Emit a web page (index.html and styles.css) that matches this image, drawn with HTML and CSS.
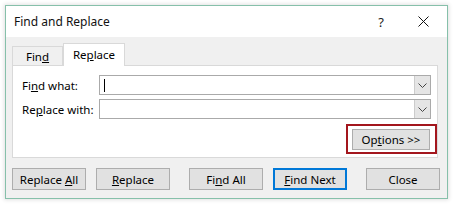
FILE: index.html
```html
<!DOCTYPE html>
<html>
<head>
    <title>Find and Replace</title>
    <link rel="stylesheet" href="styles.css">
</head>
<body>
    <div class="dialog">
        <div class="titlebar">
            <span class="title">Find and Replace</span>
            <span class="help">?</span>
            <svg class="close-x" width="11" height="11" viewBox="0 0 11 11">
                <path d="M0.5 0.5L10.5 10.5M10.5 0.5L0.5 10.5" stroke="#111" stroke-width="1" fill="none"/>
            </svg>
        </div>

        <div class="content">
            <div class="tabs">
                <div class="tab">Fin<u>d</u></div>
                <div class="tab active">Re<u>p</u>lace</div>
            </div>

            <div class="panel">
                <div class="field-row">
                    <label class="field-label">Fi<u>n</u>d what:</label>
                    <div class="combo">
                        <span class="caret"></span>
                        <span class="drop">
                            <svg width="9" height="5" viewBox="0 0 9 5"><path d="M0.5 0.5L4.5 4.5L8.5 0.5" stroke="#444" fill="none"/></svg>
                        </span>
                    </div>
                </div>
                <div class="field-row">
                    <label class="field-label">Re<u>p</u>lace with:</label>
                    <div class="combo">
                        <span class="drop">
                            <svg width="9" height="5" viewBox="0 0 9 5"><path d="M0.5 0.5L4.5 4.5L8.5 0.5" stroke="#444" fill="none"/></svg>
                        </span>
                    </div>
                </div>
                <div class="options-row">
                    <!-- red highlight box round the button -->
                    <span class="highlight">
                        <button class="btn options">Op<u>t</u>ions &gt;&gt;</button>
                    </span>
                </div>
            </div>

            <div class="button-row">
                <div class="btn-group">
                    <button class="btn">Replace <u>A</u>ll</button>
                    <button class="btn"><u>R</u>eplace</button>
                </div>
                <div class="btn-group">
                    <button class="btn">Fi<u>n</u>d All</button>
                    <button class="btn default"><u>F</u>ind Next</button>
                </div>
                <button class="btn">Close</button>
            </div>
        </div>
    </div>
</body>
</html>
```

FILE: styles.css
```css
body {
    font-family: "Noto Sans", "DejaVu Sans", sans-serif;
    font-size: 11.5px;
    color: #000;
    margin: 0;
    background: #fff;
}
.dialog {
    width: 441px;
    height: 192px;
    margin: 5px;
    border: 1px solid #86c0aa;
    background: #f0f0f0;
    box-shadow: 0 0 4px 1px rgba(0,0,0,0.12);
    display: flex;
    flex-direction: column;
}
.titlebar {
    height: 31px;
    background: #fff;
    display: flex;
    align-items: center;
    padding-left: 8px;
    padding-right: 18px;
}
.title {
    flex: 1;
    font-size: 12px;
    color: #111;
}
.help {
    font-size: 13px;
    margin-right: 34px;
    color: #222;
}
.content {
    flex: 1;
    padding: 6px 9px 0 6px;
}
.tabs {
    display: flex;
    align-items: flex-end;
    height: 22px;
    position: relative;
    z-index: 1;
}
.tab {
    height: 19px;
    width: 51px;
    box-sizing: border-box;
    border: 1px solid #d9d9d9;
    border-bottom: none;
    text-align: center;
    line-height: 19px;
}
.tab.active {
    height: 23px;
    width: 62px;
    background: #fff;
    line-height: 21px;
    margin-bottom: -1px;
}
.panel {
    height: 93px;
    background: #fff;
    border: 1px solid #d9d9d9;
    box-sizing: border-box;
    padding: 9px 6px 0 9px;
    display: flex;
    flex-direction: column;
    gap: 4px;
}
.field-row {
    display: flex;
    align-items: center;
}
.field-label {
    width: 77px;
}
.combo {
    flex: 1;
    height: 20px;
    box-sizing: border-box;
    border: 1px solid #aaa;
    background: #fff;
    display: flex;
    align-items: center;
}
.caret {
    width: 1px;
    height: 13px;
    background: #000;
    margin-left: 4px;
}
.drop {
    margin-left: auto;
    width: 16px;
    height: 18px;
    box-sizing: border-box;
    border-left: 1px solid #ccc;
    background: #e5e5e5;
    display: flex;
    align-items: center;
    justify-content: center;
}
.options-row {
    display: flex;
    justify-content: flex-end;
    margin-right: -6px;
    padding-top: 1px;
}
.highlight {
    display: flex;
    border: 2px solid #a3161d;
    padding: 3px 5px 2px 4px;
}
.btn {
    font-family: inherit;
    font-size: 11.5px;
    color: #000;
    width: 74px;
    height: 22px;
    padding: 0;
    background: #e1e1e1;
    border: 1px solid #adadad;
    box-sizing: border-box;
}
.btn.options {
    width: 78px;
    height: 21px;
}
.btn.default {
    border: 2px solid #0078d7;
}
.button-row {
    display: flex;
    justify-content: space-between;
    margin-top: 10px;
    margin-right: -2px;
}
.btn-group {
    display: flex;
    gap: 10px;
}
```
